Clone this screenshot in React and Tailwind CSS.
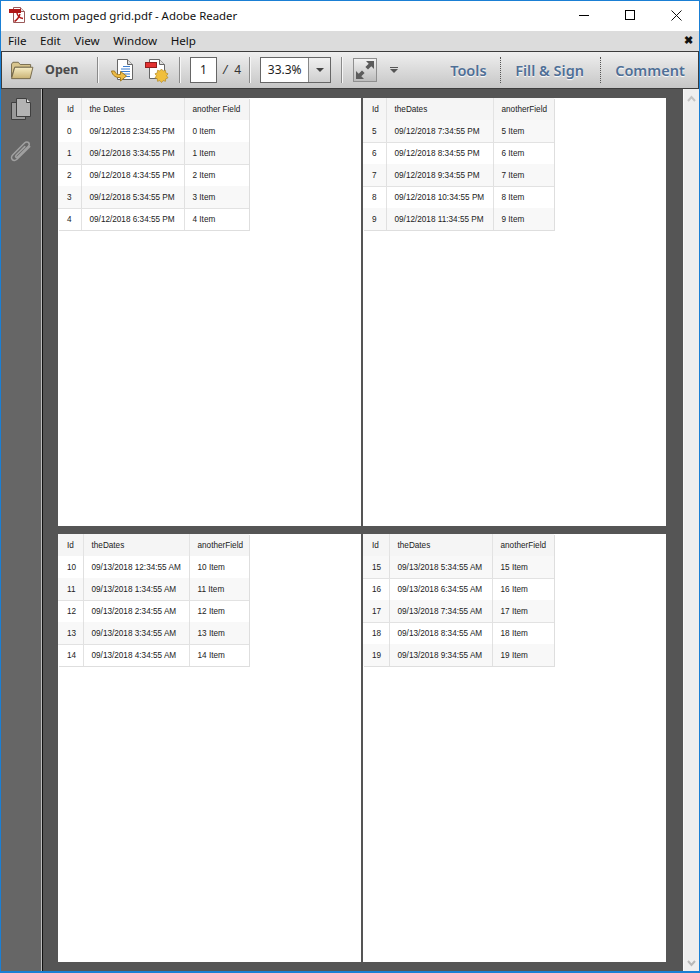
const SANS = "font-['Noto_Sans','Open_Sans',sans-serif]";

function PdfLogo() {
  return (
    <svg width="17" height="18" viewBox="0 0 17 18" className="shrink-0">
      <path d="M4.500 0.500h7l4 4v11h-11z" fill="#fff" stroke="#9a5a5a" strokeWidth="1" />
      <path d="M11.500 0.500v4h4" fill="#e4e4e4" stroke="#9a5a5a" strokeWidth="1" />
      <rect x="0" y="2" width="12" height="4" fill="#b01818" />
      <path d="M8 6c.5 3 2.500 5 6 5.500M11 7C10 10 8 13 5.500 14.500" fill="none" stroke="#b01818" strokeWidth="1.500" />
    </svg>
  );
}

function Folder() {
  return (
    <svg width="24" height="20" viewBox="0 0 26 22">
      <defs>
        <linearGradient id="fold" x1="0" y1="0" x2="0" y2="1">
          <stop offset="0" stopColor="#f7eec6" />
          <stop offset="1" stopColor="#c9b274" />
        </linearGradient>
      </defs>
      <path d="M1.500 19V4.500l1.500-2h6l2 2.500h11.500v3H5z" fill="#d9c68e" stroke="#6f6345" />
      <path d="M1.500 20.500 5 8h20l-3 12.500z" fill="url(#fold)" stroke="#6f6345" />
    </svg>
  );
}

function SendIcon() {
  return (
    <svg width="25" height="25" viewBox="0 0 25 25">
      <path d="M7.500 1.500h10l5 5v15h-15z" fill="#fff" stroke="#666" />
      <path d="M17.500 1.500v5h5" fill="#ddd" stroke="#666" />
      <path d="M13 8.500h7M11 11h9M11 13.500h9M11 16h9M13 18.500h7" stroke="#3f7fcf" strokeWidth="1.200" />
      <path d="M1.500 13c1 5 5 7 9 6.500V23l6-5-6-4.500v3c-3 .5-5-.5-6-3.500z" fill="#eebc45" stroke="#a27a22" />
    </svg>
  );
}

function ReviewIcon() {
  return (
    <svg width="25" height="25" viewBox="0 0 25 25">
      <path d="M5.500 1.500h10l5 5v14h-15z" fill="#fff" stroke="#666" />
      <path d="M15.500 1.500v5h5" fill="#ddd" stroke="#666" />
      <rect x="1.500" y="4.500" width="11" height="5" fill="#e33030" stroke="#8f2020" />
      <path d="M17.500 11l1.600 2 2.400-.7.200 2.500 2.300 1-1.500 2 1.500 2-2.300 1-.2 2.500-2.400-.7-1.600 1.900-1.600-1.900-2.400.7-.2-2.500-2.300-1 1.500-2-1.500-2 2.300-1 .2-2.500 2.400.7z" fill="#f1bf3d" stroke="#b38a25" strokeWidth=".7" />
    </svg>
  );
}

function FitIcon() {
  return (
    <div className="flex h-6 w-6 items-center justify-center border border-[#8f8f8f] bg-gradient-to-b from-[#f2f2f2] to-[#bdbdbd]">
      <svg width="20" height="20" viewBox="0 0 20 20">
        <path d="M19 1v8l-2.700-2.700-3.300 3.300-2.600-2.600 3.300-3.300L11 1z" fill="#5c5c5c" />
        <path d="M1 19v-8l2.700 2.700 3.300-3.300 2.600 2.600-3.300 3.300L9 19z" fill="#5c5c5c" />
      </svg>
    </div>
  );
}

function PagesIcon() {
  return (
    <svg width="22" height="24" viewBox="0 0 22 24">
      <path d="M1.500 5.500h14v17h-14z" fill="#9a9a9a" stroke="#3f3f3f" />
      <path d="M6.500 1.500h10l4 4v14h-14z" fill="#b3b3b3" stroke="#3f3f3f" />
      <path d="M16.500 1.500v4h4" fill="#e6e6e6" stroke="#3f3f3f" />
    </svg>
  );
}

function ClipIcon() {
  return (
    <svg width="26" height="26" viewBox="0 0 24 24">
      <path d="M20 7 8.500 18.500c-1.500 1.500-3.500 1.500-4.500.500s-1-3 .5-4.500L15.500 3.500c1-1 2.700-1 3.500-.2s.8 2.500-.2 3.500L9 16.500c-.6.600-1.300.6-1.700.2s-.4-1.100.2-1.700l8-8" fill="none" stroke="#a0a0a0" strokeWidth="1.500" strokeLinecap="round" />
    </svg>
  );
}

function Sep() {
  return <div className="mx-0 h-[26px] w-[2px] border-l border-r border-l-[#8a8a8a] border-r-[#f6f6f6]" />;
}

function Cell({ children, className }) {
  return (
    <div className={`flex items-center text-[8.2px] leading-none text-[#222] ${className}`}>
      {children}
    </div>
  );
}

function DataTable({ rows, header, cols, startGray }) {
  return (
    <div className={`grid w-fit shadow-[1px_1px_0_#dedede] font-['Liberation_Sans',Arial,sans-serif] ${cols}`}>
      {header.map((h, i) => (
        <Cell
          key={h}
          className={`h-[22px] bg-[#f5f5f5] pt-[3px] ${i === 0 ? "pl-[9px]" : "pl-[7.5px]"} ${i < 2 ? "border-r border-[#e3e3e3]" : ""}`}
        >
          {h}
        </Cell>
      ))}
      {rows.flatMap((r, ri) => {
        const gray = startGray ? ri % 2 === 0 : ri % 2 === 1;
        return r.map((c, ci) => (
          <Cell
            key={`${ri}-${ci}`}
            className={`h-[22px] pt-[2px] ${ci === 0 ? "pl-[9px]" : "pl-[7.5px]"} ${gray ? "bg-[#f8f8f8]" : "bg-white"} ${ci < 2 ? "border-r border-[#e0e0e0]" : ""} ${ri > 0 && gray === false ? "border-t border-[#e2e2e2]" : ""}`}
          >
            {c}
          </Cell>
        ));
      })}
    </div>
  );
}

function row(id, date) {
  return [String(id), date, `${id} Item`];
}

const pages = [
  {
    header: ["Id", "the Dates", "another Field"],
    cols: "grid-cols-[24px_103px_64px]",
    startGray: false,
    rows: [
      row(0, "09/12/2018 2:34:55 PM"),
      row(1, "09/12/2018 3:34:55 PM"),
      row(2, "09/12/2018 4:34:55 PM"),
      row(3, "09/12/2018 5:34:55 PM"),
      row(4, "09/12/2018 6:34:55 PM"),
    ],
  },
  {
    header: ["Id", "theDates", "anotherField"],
    cols: "grid-cols-[24px_107px_60px]",
    startGray: true,
    rows: [
      row(5, "09/12/2018 7:34:55 PM"),
      row(6, "09/12/2018 8:34:55 PM"),
      row(7, "09/12/2018 9:34:55 PM"),
      row(8, "09/12/2018 10:34:55 PM"),
      row(9, "09/12/2018 11:34:55 PM"),
    ],
  },
  {
    header: ["Id", "theDates", "anotherField"],
    cols: "grid-cols-[26px_106px_59px]",
    startGray: false,
    rows: [
      row(10, "09/13/2018 12:34:55 AM"),
      row(11, "09/13/2018 1:34:55 AM"),
      row(12, "09/13/2018 2:34:55 AM"),
      row(13, "09/13/2018 3:34:55 AM"),
      row(14, "09/13/2018 4:34:55 AM"),
    ],
  },
  {
    header: ["Id", "theDates", "anotherField"],
    cols: "grid-cols-[27px_103px_61px]",
    startGray: true,
    rows: [
      row(15, "09/13/2018 5:34:55 AM"),
      row(16, "09/13/2018 6:34:55 AM"),
      row(17, "09/13/2018 7:34:55 AM"),
      row(18, "09/13/2018 8:34:55 AM"),
      row(19, "09/13/2018 9:34:55 AM"),
    ],
  },
];

const RIGHT = "font-semibold leading-none text-[#4f6f96] text-[14.5px] [text-shadow:0_1px_1px_#fff]";

export default function App() {
  return (
    <div className={`flex h-[973px] w-[700px] flex-col overflow-hidden border border-b-2 border-[#1a7fd4] bg-white ${SANS}`}>
      <div className="flex h-[30px] shrink-0 items-center bg-white pl-[8px] text-[11.4px] text-[#111]">
        <PdfLogo />
        <span className="ml-[4px] flex-1 pb-px">custom paged grid.pdf - Adobe Reader</span>
        <div className="flex h-[30px] items-center pb-[2px]">
          <div className="flex h-[28px] w-[46px] items-center justify-center">
            <div className="h-px w-[10px] bg-black" />
          </div>
          <div className="flex h-[28px] w-[46px] items-center justify-center">
            <div className="h-[10px] w-[10px] border border-black" />
          </div>
          <div className="flex h-[28px] w-[46px] items-center justify-center">
            <svg width="11" height="11" viewBox="0 0 11 11">
              <path d="M.5.500l10 10M10.500.500l-10 10" stroke="#111" />
            </svg>
          </div>
        </div>
      </div>
      <div className="flex h-[20px] shrink-0 items-center gap-[13.5px] bg-[#dcdcdc] pl-[7px] pr-[6px] text-[11.6px] text-[#111]">
        <span>File</span>
        <span>Edit</span>
        <span>View</span>
        <span>Window</span>
        <span>Help</span>
        <span className="ml-auto pb-[3px] text-[11px] font-bold leading-none">✖</span>
      </div>
      <div className="flex h-[38px] shrink-0 items-center border border-[#3c3c3c] bg-gradient-to-b from-[#efefef] to-[#c6c6c6] pl-[8px]">
        <Folder />
        <span className="ml-[11px] w-[45px] text-[12.5px] font-bold text-[#4a4a4a]">Open</span>
        <div className="ml-[7px]"><Sep /></div>
        <div className="ml-[11px]"><SendIcon /></div>
        <div className="ml-[9px]"><ReviewIcon /></div>
        <div className="ml-[10px]"><Sep /></div>
        <div className="ml-[9px] flex h-[26px] w-[27px] items-center justify-center border border-[#666] bg-white text-[12px] text-[#222]">1</div>
        <span className="ml-[6px] text-[12px] italic text-[#333]">/</span>
        <span className="ml-[7px] text-[12px] text-[#333]">4</span>
        <div className="ml-[8px]"><Sep /></div>
        <div className="ml-[9px] flex h-[26px] w-[71px] border border-[#666] bg-white">
          <div className="flex flex-1 items-center justify-center text-[12px] text-[#222]">33.3%</div>
          <div className="flex w-[22px] items-center justify-center border-l border-[#888] bg-gradient-to-b from-[#f0f0f0] to-[#cfcfcf]">
            <div className="h-0 w-0 border-x-[4px] border-t-[4px] border-x-transparent border-t-[#444]" />
          </div>
        </div>
        <div className="ml-[10px]"><Sep /></div>
        <div className="ml-[10px]"><FitIcon /></div>
        <div className="ml-[13px] flex flex-col items-center gap-px">
          <div className="h-px w-[8px] bg-[#555]" />
          <div className="h-0 w-0 border-x-[4px] border-t-[4px] border-x-transparent border-t-[#555]" />
        </div>
        <span className={`ml-[52px] w-[50px] ${RIGHT}`}>Tools</span>
        <div className="h-[26px] border-l border-dotted border-[#555]" />
        <span className={`ml-[14px] w-[85px] ${RIGHT}`}>Fill &amp; Sign</span>
        <div className="h-[26px] border-l border-dotted border-[#555]" />
        <span className={`ml-[14px] ${RIGHT}`}>Comment</span>
      </div>
      <div className="flex min-h-0 flex-1">
        <div className="flex w-[41px] shrink-0 flex-col items-center gap-[18px] border-r border-[#bdbdbd] bg-[#666] pt-[8px]">
          <PagesIcon />
          <ClipIcon />
        </div>
        <div className="w-px shrink-0 bg-[#111]" />
        <div className="flex-1 bg-[#555] pl-[15px] pt-[9px]">
          <div className="grid w-fit grid-cols-[303px_303px] gap-x-[2px] gap-y-[8px]">
            {pages.map((p, i) => (
              <div key={i} className="h-[428px] bg-white">
                <DataTable {...p} />
              </div>
            ))}
          </div>
        </div>
        <div className="flex w-[16px] shrink-0 flex-col items-center justify-between border-l border-[#f8f8f8] bg-[#eeeeee] pb-[4px] pt-[6px]">
          <svg width="9" height="7" viewBox="0 0 9 7">
            <path d="M1 6l3.500-4L8 6" fill="none" stroke="#c4c4c4" strokeWidth="2" />
          </svg>
          <svg width="9" height="7" viewBox="0 0 9 7">
            <path d="M1 1l3.500 4L8 1" fill="none" stroke="#b8b8b8" strokeWidth="2" />
          </svg>
        </div>
      </div>
    </div>
  );
}
